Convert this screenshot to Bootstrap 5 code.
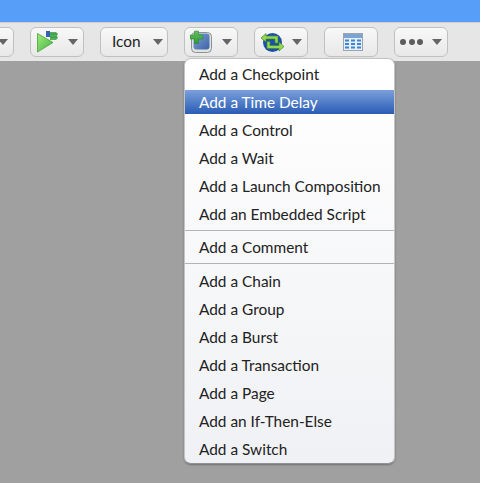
<!DOCTYPE html>
<html lang="en">
<head>
    <meta charset="UTF-8">
    <meta name="viewport" content="width=device-width, initial-scale=1.0">
    <title>Toolbar menu</title>
    <link href="https://cdn.jsdelivr.net/npm/bootstrap@5.3.0/dist/css/bootstrap.min.css" rel="stylesheet">
    <style>
        html, body {
            height: 100%;
        }
        body {
            background-color: #a0a0a0;
            font-family: "Lato", "Liberation Sans", sans-serif;
            overflow: hidden;
        }
        .title-strip {
            height: 22px;
            background-color: #569ef7;
        }
        .tool-strip {
            height: 39px;
            padding-top: 4px;
            margin-left: -40px;
            gap: 16px;
            background: #e6e6e6;
            border-top: 1px solid #d0d0d0;
        }
        .tool-btn {
            width: 54px;
            height: 30px;
            padding: 0 5px;
            color: #222;
            font-size: 15.4px;
            background: linear-gradient(#f8f8f8, #e8e8e8);
            border: 1px solid #bfc1c1;
            border-radius: 6px;
        }
        .tool-btn.wide {
            width: 68px;
            padding: 0 4px 0 11px;
        }
        .tool-btn svg {
            filter: blur(.4px);
        }
        .drop-caret {
            width: 0;
            height: 0;
            border-left: 5.5px solid transparent;
            border-right: 5.5px solid transparent;
            border-top: 6px solid #666;
        }
        .dot-row {
            gap: 2.5px;
        }
        .dot {
            width: 6px;
            height: 6px;
            border-radius: 50%;
            background-color: #5c5c5c;
        }
        .add-menu {
            top: 58px;
            left: 184px;
            width: 211px;
            padding: 1px 0 0;
            border: 1px solid #c4c4c4;
            border-bottom-color: #8f9396;
            border-radius: 7px;
            background: linear-gradient(#ffffff, #f0f1f4);
            box-shadow: 0 1px 2px rgba(0, 0, 0, .3);
        }
        .add-menu .dropdown-item {
            height: 24px;
            margin: 2px 0;
            padding: 0 14px;
            font-size: 15.4px;
            line-height: 24px;
            color: #222;
        }
        .add-menu .dropdown-item.active {
            color: #fff;
            background: linear-gradient(#7ba0dc, #2a5cb4);
        }
        .add-menu .dropdown-divider {
            margin: 2.25px 0 1.75px;
            border-top: 1.5px solid #b4b4b4;
            opacity: 1;
        }
        .add-menu .dropdown-divider.tall-gap {
            margin-bottom: 2.25px;
        }
    </style>
</head>
<body>
    <div class="title-strip"></div>
    <div class="tool-strip d-flex">
        <!-- first button is cut off by the window edge -->
        <div class="tool-btn d-flex align-items-center justify-content-end flex-shrink-0"><span class="drop-caret"></span></div>
        <div class="tool-btn d-flex align-items-center justify-content-between flex-shrink-0">
            <svg width="24" height="24" viewBox="0 0 24 24">
                <defs>
                    <linearGradient id="playFill" x1="0" y1="0" x2="1" y2="1">
                        <stop offset="0" stop-color="#a4ea7c"/>
                        <stop offset="1" stop-color="#3fb344"/>
                    </linearGradient>
                </defs>
                <rect x="10" y="1" width="4" height="6" fill="#3560b4"/>
                <path d="M14 2h6l2 2-1 2 1 2-2 2h-6z" fill="#57b05a"/>
                <path d="M14 4h7M14 7h7" stroke="#2f8f4a" stroke-width=".8"/>
                <path d="M1.500 3.500L17 12.500 1.500 22z" fill="url(#playFill)" stroke="#4ba03a" stroke-width=".8"/>
            </svg>
            <span class="drop-caret"></span>
        </div>
        <div class="tool-btn wide d-flex align-items-center justify-content-between flex-shrink-0">
            <span>Icon</span>
            <span class="drop-caret"></span>
        </div>
        <div class="tool-btn d-flex align-items-center justify-content-between flex-shrink-0">
            <svg width="24" height="24" viewBox="0 0 24 24">
                <defs>
                    <linearGradient id="gem" x1="0" y1="0" x2="1" y2="1">
                        <stop offset="0" stop-color="#7da3d6"/>
                        <stop offset="1" stop-color="#3f62a6"/>
                    </linearGradient>
                    <linearGradient id="plusFill" x1="0" y1="0" x2="0" y2="1">
                        <stop offset="0" stop-color="#63c75a"/>
                        <stop offset="1" stop-color="#2c9a35"/>
                    </linearGradient>
                </defs>
                <rect x="1.500" y="2.500" width="20" height="20" rx="4" fill="#dfe3e2" stroke="#8d9190"/>
                <rect x="3.500" y="3.500" width="16" height="16" rx="3" fill="url(#gem)"/>
                <path d="M4.500 1h4v4h4.500v4H8.500v4.500h-4V9H0V5h4.500z" fill="url(#plusFill)" stroke="#2b7f2a" stroke-width=".5"/>
            </svg>
            <span class="drop-caret"></span>
        </div>
        <div class="tool-btn d-flex align-items-center justify-content-between flex-shrink-0">
            <svg width="24" height="24" viewBox="0 0 24 24">
                <circle cx="12.500" cy="12.500" r="9.500" fill="#1d4fb0"/>
                <path d="M1 8l5-4.500V6h12v7h-3V9H6v3z" fill="#93d84e" stroke="#3e8a26" stroke-width=".7"/>
                <path d="M24 16.500L19 21v-2.500H7v-7h3v4h9V12z" fill="#93d84e" stroke="#3e8a26" stroke-width=".7"/>
            </svg>
            <span class="drop-caret"></span>
        </div>
        <div class="tool-btn d-flex align-items-center justify-content-center flex-shrink-0">
            <svg class="ms-1" width="20" height="18" viewBox="0 0 20 18">
                <rect x=".5" y=".5" width="19" height="17" fill="#e6eef7" stroke="#9aa5b0"/>
                <rect x="1" y="1" width="18" height="4" fill="#7fa3d0"/>
                <path d="M2 6.500h4v2H2zM8 6.500h4v2H8zM14 6.500h4v2h-4zM2 10h4v2H2zM8 10h4v2H8zM14 10h4v2h-4zM2 13.500h4v2H2zM8 13.500h4v2H8zM14 13.500h4v2h-4z" fill="#3a86cf"/>
            </svg>
        </div>
        <div class="tool-btn d-flex align-items-center justify-content-between flex-shrink-0">
            <span class="dot-row d-flex"><span class="dot"></span><span class="dot"></span><span class="dot"></span></span>
            <span class="drop-caret"></span>
        </div>
    </div>

    <ul class="dropdown-menu show add-menu d-flex flex-column position-absolute m-0">
        <li><a class="dropdown-item" href="#">Add a Checkpoint</a></li>
        <li><a class="dropdown-item active" href="#">Add a Time Delay</a></li>
        <li><a class="dropdown-item" href="#">Add a Control</a></li>
        <li><a class="dropdown-item" href="#">Add a Wait</a></li>
        <li><a class="dropdown-item" href="#">Add a Launch Composition</a></li>
        <li><a class="dropdown-item" href="#">Add an Embedded Script</a></li>
        <li><hr class="dropdown-divider"></li>
        <li><a class="dropdown-item" href="#">Add a Comment</a></li>
        <li><hr class="dropdown-divider tall-gap"></li>
        <li><a class="dropdown-item" href="#">Add a Chain</a></li>
        <li><a class="dropdown-item" href="#">Add a Group</a></li>
        <li><a class="dropdown-item" href="#">Add a Burst</a></li>
        <li><a class="dropdown-item" href="#">Add a Transaction</a></li>
        <li><a class="dropdown-item" href="#">Add a Page</a></li>
        <li><a class="dropdown-item" href="#">Add an If-Then-Else</a></li>
        <li><a class="dropdown-item" href="#">Add a Switch</a></li>
    </ul>

    <script src="https://cdn.jsdelivr.net/npm/bootstrap@5.3.0/dist/js/bootstrap.bundle.min.js"></script>
</body>
</html>
